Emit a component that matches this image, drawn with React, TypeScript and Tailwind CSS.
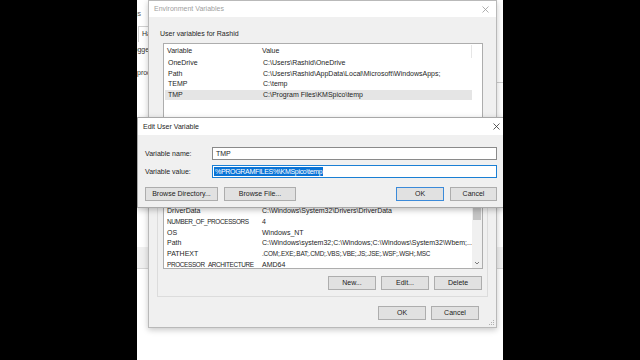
import React from 'react';

type Var = { name: string; value: string; nameCls?: string; valueCls?: string };

const userVars: Var[] = [
  { name: 'OneDrive', value: 'C:\\Users\\Rashid\\OneDrive' },
  { name: 'Path', value: 'C:\\Users\\Rashid\\AppData\\Local\\Microsoft\\WindowsApps;' },
  { name: 'TEMP', value: 'C:\\temp' },
  { name: 'TMP', value: 'C:\\Program Files\\KMSpico\\temp' },
];

// Segoe UI capitals are narrower than Arial's, so long upper-case strings get squeezed
const systemVars: Var[] = [
  { name: 'ComSpec', value: 'C:\\Windows\\system32\\cmd.exe' },
  { name: 'DriverData', value: 'C:\\Windows\\System32\\Drivers\\DriverData' },
  { name: 'NUMBER_OF_PROCESSORS', value: '4', nameCls: 'text-[6.4px] tracking-[-0.35px]' },
  { name: 'OS', value: 'Windows_NT' },
  { name: 'Path', value: 'C:\\Windows\\system32;C:\\Windows;C:\\Windows\\System32\\Wbem;...' },
  {
    name: 'PATHEXT',
    value: '.COM;.EXE;.BAT;.CMD;.VBS;.VBE;.JS;.JSE;.WSF;.WSH;.MSC',
    valueCls: 'text-[6.4px] tracking-[-0.2px]',
  },
  { name: 'PROCESSOR_ARCHITECTURE', value: 'AMD64', nameCls: 'text-[6.4px] tracking-[-0.35px]' },
];

const CloseIcon = ({ color }: { color: string }) => (
  <svg width="7" height="7" viewBox="0 0 7 7">
    <path d="M0.5 0.5L6.5 6.5M6.5 0.5L0.5 6.5" stroke={color} strokeWidth="0.8" />
  </svg>
);

const WinButton = ({ label, width, primary }: { label: string; width: string; primary?: boolean }) => (
  <div
    className={`${width} h-[14px] flex items-center justify-center bg-[#e1e1e1] border ${
      primary ? 'border-[#3b8ad9]' : 'border-[#adadad]'
    } text-[#222]`}
  >
    {label}
  </div>
);

const VarRow = ({ v, selected }: { v: Var; selected?: boolean }) => (
  <div className={`flex items-center h-[10.7px] whitespace-nowrap ${selected ? 'bg-[#e5e5e5]' : ''}`}>
    <span className={`w-[98px] pl-[3px] shrink-0 ${v.nameCls ?? ''}`}>{v.name}</span>
    <span className={v.valueCls ?? ''}>{v.value}</span>
  </div>
);

export default function App() {
  return (
    <div className="w-[640px] h-[360px] bg-black flex font-['Liberation_Sans',Arial,sans-serif] text-[7px] leading-[8px] text-[#1e1e1e]">
      <div className="w-[137px] shrink-0" />

      <div className="relative w-[366px] h-full bg-white overflow-hidden shrink-0">
        {/* System Properties window behind, only its edges show */}
        <div className="absolute left-[-77px] top-0 w-[460px] h-[300px] bg-white flex flex-col text-[#333]">
          <div className="mt-[10px] w-[81px] text-right text-[#555] whitespace-nowrap">Settings</div>
          <div className="mt-[8px] h-[16px] w-[88px] flex overflow-hidden">
            <div className="ml-[78px] w-[40px] shrink-0 border-l border-t border-r border-[#d0d0d0] pl-[3px] pt-[3px]">Hardware</div>
          </div>
          <div className="mt-[4px] w-[88px] overflow-hidden">
            <div className="ml-[72px] whitespace-nowrap">logged</div>
          </div>
          <div className="mt-[15px] w-[88px] overflow-hidden">
            <div className="ml-[77px] whitespace-nowrap">processor</div>
          </div>
          <div className="mt-[5px] ml-[437px] w-[23px] border-t border-[#cfcfcf]" />
          <div className="mt-[164px] h-[22px] bg-[#f0f0f0] border-b border-[#d6d6d6]" />
        </div>

        {/* Environment Variables window */}
        <div className="absolute left-[11px] top-0 w-[349px] h-[328px] bg-[#f0f0f0] border border-[#b9b9b9] shadow-[0_2px_6px_rgba(0,0,0,0.22)] flex flex-col">
          <div className="h-[16px] bg-white flex items-center justify-between pl-[5px] pr-[7px] shrink-0">
            <span className="text-[#a0a0a0]">Environment Variables</span>
            <CloseIcon color="#9a9a9a" />
          </div>

          <div className="mt-[12px] ml-[11px] h-[10px] leading-[10px]">User variables for Rashid</div>

          <div className="mt-[4px] ml-[14px] w-[320px] h-[80px] bg-white border border-[#adadad] flex">
            <div className="flex-1 flex flex-col pt-[1px] pl-[1px] mr-[10px]">
              <div className="flex items-center h-[12.5px] border-r border-[#e6e6e6]">
                <span className="w-[97px] pl-[2px] shrink-0">Variable</span>
                <span>Value</span>
              </div>
              {userVars.map((v) => (
                <VarRow key={v.name} v={v} selected={v.name === 'TMP'} />
              ))}
            </div>
          </div>

          <div className="mt-[6px] mr-[13px] flex justify-end gap-[5px]">
            <WinButton label="New..." width="w-[48px]" />
            <WinButton label="Edit..." width="w-[48px]" />
            <WinButton label="Delete" width="w-[48px]" />
          </div>

          <div className="mt-[3px] ml-[8px] w-[331px] border border-[#dcdcdc] pt-[16px] pb-[6px] pl-[5px] pr-[5px] flex flex-col">
            <div className="w-[320px] h-[106px] bg-white border border-[#adadad] flex">
              <div className="flex-1 flex flex-col justify-end overflow-hidden">
                <div className="translate-y-[1.5px]">
                  {systemVars.map((v) => (
                    <VarRow key={v.name + v.value} v={v} />
                  ))}
                </div>
              </div>
              <div className="w-[10px] bg-[#f0f0f0] flex flex-col items-center">
                <div className="h-[10px]" />
                <div className="w-[8px] h-[46px] bg-[#c4c4c4]" />
                <div className="flex-1" />
                <svg width="6" height="10" viewBox="0 0 6 10">
                  <path d="M1 4L3 6L5 4" stroke="#606060" strokeWidth="0.8" fill="none" />
                </svg>
              </div>
            </div>
            <div className="mt-[7px] flex justify-end gap-[5px]">
              <WinButton label="New..." width="w-[48px]" />
              <WinButton label="Edit..." width="w-[48px]" />
              <WinButton label="Delete" width="w-[48px]" />
            </div>
          </div>

          <div className="mt-[9px] pr-[17px] flex justify-end gap-[5px]">
            <WinButton label="OK" width="w-[48px]" />
            <WinButton label="Cancel" width="w-[48px]" />
          </div>

          <div className="flex-1 flex items-end justify-end pr-[1px] pb-[1px]">
            <svg width="6" height="6" viewBox="0 0 6 6">
              <rect x="4" y="0" width="1" height="1" fill="#b0b0b0" />
              <rect x="2" y="2" width="1" height="1" fill="#b0b0b0" />
              <rect x="4" y="2" width="1" height="1" fill="#b0b0b0" />
              <rect x="0" y="4" width="1" height="1" fill="#b0b0b0" />
              <rect x="2" y="4" width="1" height="1" fill="#b0b0b0" />
              <rect x="4" y="4" width="1" height="1" fill="#b0b0b0" />
            </svg>
          </div>
        </div>

        {/* Edit User Variable dialog */}
        <div className="absolute left-0 top-[117px] w-[368px] h-[91px] bg-[#f0f0f0] border border-[#a8a8a8] shadow-[0_2px_6px_rgba(0,0,0,0.25)] flex flex-col">
          <div className="h-[17px] bg-white flex items-center justify-between pl-[5px] shrink-0">
            <span>Edit User Variable</span>
            <span className="w-[14px] mr-[1px] flex justify-center">
              <CloseIcon color="#333" />
            </span>
          </div>

          <div className="flex flex-col pl-[7px] pr-[7px]">
            <div className="mt-[12px] flex items-center">
              <span className="w-[67px] shrink-0">Variable name:</span>
              <div className="w-[285px] h-[13px] bg-white border border-[#8a8a8a] flex items-center pl-[3px]">TMP</div>
            </div>
            <div className="mt-[5px] flex items-center">
              <span className="w-[67px] shrink-0">Variable value:</span>
              <div className="w-[285px] h-[13px] bg-white border border-[#1a7fd4] flex items-center pl-[1px]">
                <span className="bg-[#0a74d6] text-white leading-[9px] px-[1px] whitespace-nowrap tracking-[-0.3px]">
                  %PROGRAMFILES%\KMSpico\temp
                </span>
              </div>
            </div>
            <div className="mt-[9px] flex items-center gap-[6px]">
              <WinButton label="Browse Directory..." width="w-[73px]" />
              <WinButton label="Browse File..." width="w-[72px]" />
              <div className="flex-1" />
              <WinButton label="OK" width="w-[48px]" primary />
              <WinButton label="Cancel" width="w-[47px]" />
            </div>
          </div>
        </div>
      </div>

      <div className="flex-1" />
    </div>
  );
}
